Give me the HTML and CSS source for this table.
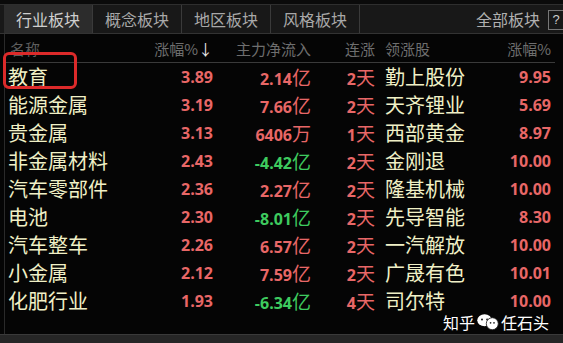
FILE: index.html
```html
<!DOCTYPE html>
<html lang="zh">
<head>
<meta charset="utf-8">
<link rel="stylesheet" href="styles.css">
</head>
<body>
<div class="screen">
  <div class="topline"></div>
  <div class="tabs">
    <div class="tab active">行业板块</div>
    <div class="tab">概念板块</div>
    <div class="tab">地区板块</div>
    <div class="tab">风格板块</div>
    <div class="tab-spacer"></div>
    <div class="tab-all">全部板块</div>
    <div class="help">?</div>
  </div>
  <div class="table">
    <div class="row head">
      <div class="c-name">名称</div>
      <div class="c-pct">涨幅%<span class="arrow">↓</span></div>
      <div class="c-flow">主力净流入</div>
      <div class="c-days">连涨</div>
      <div class="c-lead">领涨股</div>
      <div class="c-lpct">涨幅%</div>
    </div>
    <div class="row">
      <div class="c-name"><span class="hl">教育</span></div>
      <div class="c-pct up">3.89</div>
      <div class="c-flow up">2.14<span class="u">亿</span></div>
      <div class="c-days up">2<span class="u">天</span></div>
      <div class="c-lead">勤上股份</div>
      <div class="c-lpct up">9.95</div>
    </div>
    <div class="row">
      <div class="c-name">能源金属</div>
      <div class="c-pct up">3.19</div>
      <div class="c-flow up">7.66<span class="u">亿</span></div>
      <div class="c-days up">2<span class="u">天</span></div>
      <div class="c-lead">天齐锂业</div>
      <div class="c-lpct up">5.69</div>
    </div>
    <div class="row">
      <div class="c-name">贵金属</div>
      <div class="c-pct up">3.13</div>
      <div class="c-flow up">6406<span class="u">万</span></div>
      <div class="c-days up">1<span class="u">天</span></div>
      <div class="c-lead">西部黄金</div>
      <div class="c-lpct up">8.97</div>
    </div>
    <div class="row">
      <div class="c-name">非金属材料</div>
      <div class="c-pct up">2.43</div>
      <div class="c-flow down">-4.42<span class="u">亿</span></div>
      <div class="c-days up">2<span class="u">天</span></div>
      <div class="c-lead">金刚退</div>
      <div class="c-lpct up">10.00</div>
    </div>
    <div class="row">
      <div class="c-name">汽车零部件</div>
      <div class="c-pct up">2.36</div>
      <div class="c-flow up">2.27<span class="u">亿</span></div>
      <div class="c-days up">2<span class="u">天</span></div>
      <div class="c-lead">隆基机械</div>
      <div class="c-lpct up">10.00</div>
    </div>
    <div class="row">
      <div class="c-name">电池</div>
      <div class="c-pct up">2.30</div>
      <div class="c-flow down">-8.01<span class="u">亿</span></div>
      <div class="c-days up">2<span class="u">天</span></div>
      <div class="c-lead">先导智能</div>
      <div class="c-lpct up">8.30</div>
    </div>
    <div class="row">
      <div class="c-name">汽车整车</div>
      <div class="c-pct up">2.26</div>
      <div class="c-flow up">6.57<span class="u">亿</span></div>
      <div class="c-days up">2<span class="u">天</span></div>
      <div class="c-lead">一汽解放</div>
      <div class="c-lpct up">10.00</div>
    </div>
    <div class="row">
      <div class="c-name">小金属</div>
      <div class="c-pct up">2.12</div>
      <div class="c-flow up">7.59<span class="u">亿</span></div>
      <div class="c-days up">2<span class="u">天</span></div>
      <div class="c-lead">广晟有色</div>
      <div class="c-lpct up">10.01</div>
    </div>
    <div class="row">
      <div class="c-name">化肥行业</div>
      <div class="c-pct up">1.93</div>
      <div class="c-flow down">-6.34<span class="u">亿</span></div>
      <div class="c-days up">4<span class="u">天</span></div>
      <div class="c-lead">司尔特</div>
      <div class="c-lpct up">10.00</div>
    </div>
    <div class="filler"></div>
  </div>
  <div class="bottom"></div>
  <div class="watermark">
    <span>知乎</span>
    <svg class="wm-logo" width="24" height="20" viewBox="0 0 28 22">
      <ellipse cx="10" cy="9" rx="8.5" ry="7" fill="#fff"/>
      <circle cx="7" cy="8" r="1.2" fill="#222"/>
      <circle cx="13" cy="8" r="1.2" fill="#222"/>
      <circle cx="19" cy="13" r="7" fill="#fff" stroke="#222" stroke-width="1"/>
      <circle cx="17" cy="12" r="1" fill="#222"/>
      <circle cx="21" cy="12" r="1" fill="#222"/>
    </svg>
    <span>任石头</span>
  </div>
</div>
</body>
</html>
```
FILE: styles.css
```css
html, body {
  margin: 0;
  padding: 0;
  background: #000;
}
.screen {
  position: relative;
  width: 563px;
  height: 343px;
  overflow: hidden;
  background: #050505;
  display: flex;
  flex-direction: column;
  font-family: "Noto Sans CJK SC", "Noto Sans", sans-serif;
}
.topline {
  height: 4px;
  border-bottom: 1px solid #2e2e2e;
  background: #0a0a0a;
}
.tabs {
  display: flex;
  align-items: stretch;
  height: 28px;
  background: #181818;
  border-bottom: 1px solid #333;
  padding-left: 4px;
}
.tab {
  width: 88px;
  display: flex;
  align-items: center;
  justify-content: center;
  font-size: 16px;
  color: #a8a8a8;
  border-right: 1px solid #3a3a3a;
  line-height: 1;
}
.tab.active {
  background: #2c2c2c;
  color: #cfcfcf;
}
.tab-spacer {
  flex: 1;
}
.tab-all {
  display: flex;
  align-items: center;
  font-size: 16px;
  color: #b0b0b0;
  margin-right: 8px;
}
.help {
  align-self: center;
  width: 14px;
  height: 18px;
  border: 1px solid #777;
  border-right: none;
  color: #ccc;
  font-family: "Liberation Sans", sans-serif;
  font-size: 13px;
  display: flex;
  align-items: center;
  justify-content: center;
  margin-top: 1px;
}
.table {
  flex: 1;
  display: flex;
  flex-direction: column;
  margin-left: 4px;
  border-left: 1px solid #2a2a2a;
}
.row {
  display: grid;
  grid-template-columns: 145px 63px 98px 64px 94px 82px;
  height: 28px;
  align-items: center;
}
.row.head {
  height: 28px;
  border-bottom: 1px solid #3a3a3a;
  font-size: 15px;
  color: #6e6e6e;
  margin-right: 8px;
}
.c-name {
  padding-left: 3px;
  font-size: 20px;
  color: #f0f0c6;
  line-height: 1;
}
.head .c-name {
  font-size: 15px;
  color: #5e5e5e;
  padding-left: 5px;
}
.head .c-pct, .head .c-flow, .head .c-days, .head .c-lead, .head .c-lpct {
  font-size: 15px;
  color: #6e6e6e;
  font-family: "Noto Sans CJK SC", sans-serif;
  font-weight: normal;
}
.arrow {
  color: #e8e8e8;
}
.c-pct, .c-flow, .c-days, .c-lpct {
  text-align: right;
  font-family: "Open Sans", "Liberation Sans", sans-serif;
  font-weight: 700;
  font-size: 16px;
  line-height: 1;
}
.c-lead {
  padding-left: 10px;
  font-size: 20px;
  color: #f0f0c6;
  line-height: 1;
}
.u {
  font-family: "Noto Sans CJK SC", sans-serif;
  font-weight: normal;
  font-size: 19px;
}
.up { color: #e86767; }
.down { color: #3ecb5f; }
.hl {
  position: relative;
  display: inline-block;
}
.hl::after {
  content: "";
  position: absolute;
  left: -5px;
  top: -15px;
  width: 74px;
  height: 37px;
  border: 3px solid #dc2a2a;
  border-radius: 6px;
  box-sizing: border-box;
}
.filler {
  flex: 1;
}
.bottom {
  height: 8px;
  border-top: 1px solid #3a3a3a;
  background: #262626;
}
.watermark {
  position: absolute;
  left: 443px;
  top: 312px;
  display: flex;
  align-items: center;
  gap: 1px;
  white-space: nowrap;
  color: #fff;
  font-size: 16px;
  line-height: 1;
  text-shadow: 0 0 2px #000;
}
.wm-logo {
  flex: none;
}
```
